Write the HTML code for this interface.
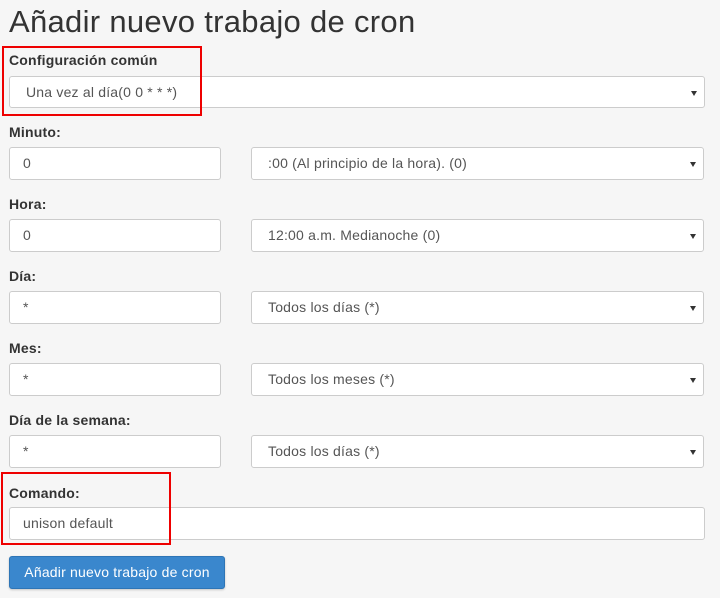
<!DOCTYPE html>
<html><head><meta charset="utf-8"><style>
body{margin:0;width:720px;height:598px;background:#f6f6f6;font-family:"Liberation Sans",sans-serif;position:relative;overflow:hidden;color:#333}
h1{position:absolute;left:9px;top:4px;margin:0;font-weight:normal;font-size:31px;color:#333;letter-spacing:0.3px}
.l{position:absolute;left:9px;font-weight:bold;font-size:14px;color:#333;letter-spacing:0.2px}
.f{position:absolute;height:33px;background:#fff;border:1px solid #ccc;border-radius:3px;box-sizing:border-box;font-size:14px;color:#555;line-height:31px;padding-left:13px;letter-spacing:0.2px}
.s::after{content:"";position:absolute;right:7px;top:14px;border-left:3px solid transparent;border-right:3px solid transparent;border-top:5px solid #333}
.s{padding-left:16px}
.r{position:absolute;border:2px solid #e00;box-sizing:border-box}
.b{position:absolute;left:9px;top:556px;width:216px;height:33px;background:#3a87cd;border:1px solid #2e75b6;border-radius:3px;box-sizing:border-box;color:#fff;font-size:14px;line-height:31px;text-align:center;box-shadow:0 1px 2px rgba(0,0,0,.2);letter-spacing:0.2px}
</style></head><body>
<h1>Añadir nuevo trabajo de cron</h1>
<div class="l" style="top:52px">Configuración común</div>
<div class="f s" style="left:9px;top:76px;width:696px;height:32px;line-height:30px">Una vez al día(0 0 * * *)</div>

<div class="l" style="top:124px">Minuto:</div>
<div class="f" style="left:9px;top:147px;width:212px">0</div>
<div class="f s" style="left:251px;top:147px;width:453px">:00 (Al principio de la hora). (0)</div>

<div class="l" style="top:196px">Hora:</div>
<div class="f" style="left:9px;top:219px;width:212px">0</div>
<div class="f s" style="left:251px;top:219px;width:453px">12:00 a.m. Medianoche (0)</div>

<div class="l" style="top:268px">Día:</div>
<div class="f" style="left:9px;top:291px;width:212px">*</div>
<div class="f s" style="left:251px;top:291px;width:453px">Todos los días (*)</div>

<div class="l" style="top:340px">Mes:</div>
<div class="f" style="left:9px;top:363px;width:212px">*</div>
<div class="f s" style="left:251px;top:363px;width:453px">Todos los meses (*)</div>

<div class="l" style="top:412px">Día de la semana:</div>
<div class="f" style="left:9px;top:435px;width:212px">*</div>
<div class="f s" style="left:251px;top:435px;width:453px">Todos los días (*)</div>

<div class="l" style="top:485px">Comando:</div>
<div class="f" style="left:9px;top:507px;width:696px;height:33px;line-height:31px">unison default</div>

<div class="r" style="left:2px;top:46px;width:200px;height:70px"></div>
<div class="r" style="left:1px;top:472px;width:170px;height:73px"></div>
<div class="b">Añadir nuevo trabajo de cron</div>
</body></html>
